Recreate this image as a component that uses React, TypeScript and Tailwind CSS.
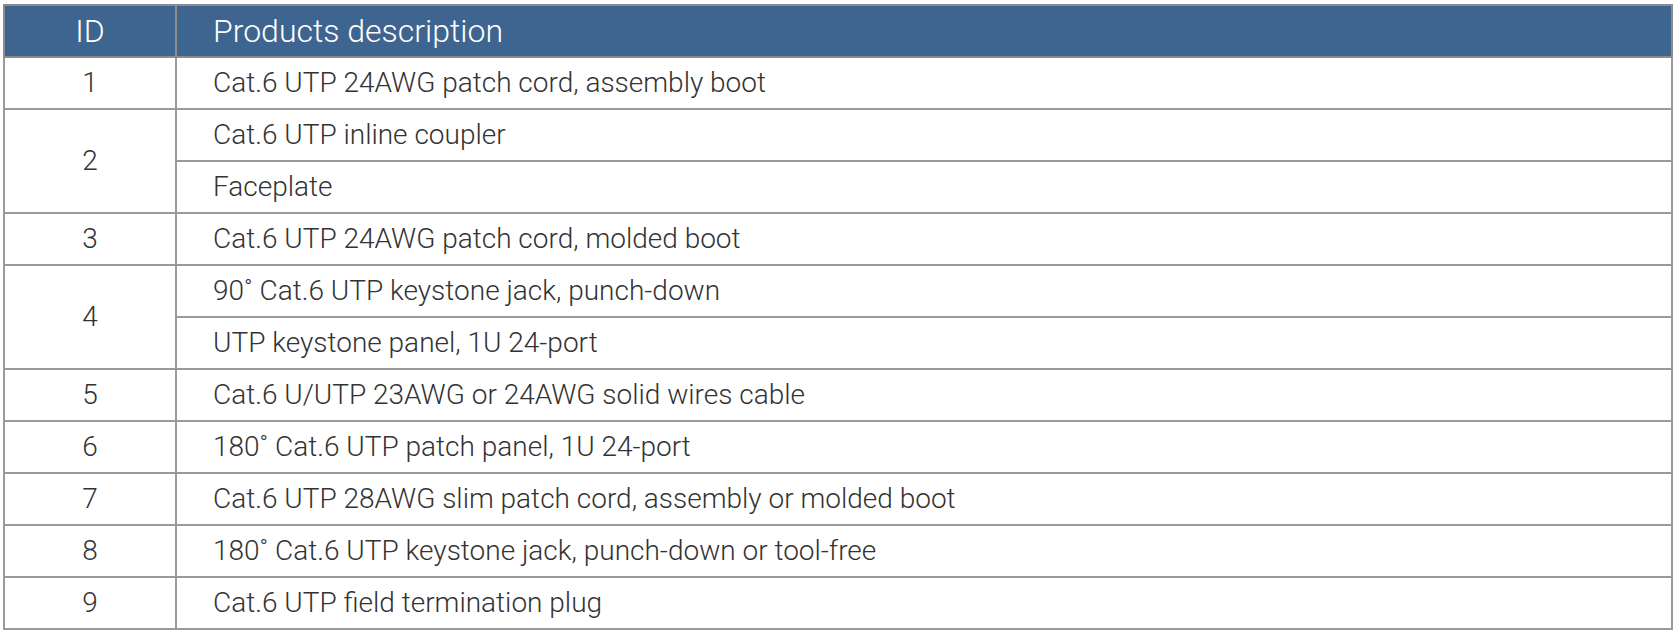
import React from 'react';

type Row = { id: string; items: string[] };

const rows: Row[] = [
  { id: '1', items: ['Cat.6 UTP 24AWG patch cord, assembly boot'] },
  { id: '2', items: ['Cat.6 UTP inline coupler', 'Faceplate'] },
  { id: '3', items: ['Cat.6 UTP 24AWG patch cord, molded boot'] },
  { id: '4', items: ['90˚ Cat.6 UTP keystone jack, punch-down', 'UTP keystone panel, 1U 24-port'] },
  { id: '5', items: ['Cat.6 U/UTP 23AWG or 24AWG solid wires cable'] },
  { id: '6', items: ['180˚ Cat.6 UTP patch panel, 1U 24-port'] },
  { id: '7', items: ['Cat.6 UTP 28AWG slim patch cord, assembly or molded boot'] },
  { id: '8', items: ['180˚ Cat.6 UTP keystone jack, punch-down or tool-free'] },
  { id: '9', items: ['Cat.6 UTP field termination plug'] },
];

export default function App() {
  return (
    <div
      className="w-[1675px] h-[633px] bg-white pl-[3px] pt-[4px]"
      style={{ fontFamily: 'Roboto, "Liberation Sans", Arial, sans-serif' }}
    >
      <table className="w-[1670px] border-collapse border-2 border-[#8c8c8c] text-[28px] font-light text-[#333]">
        <thead>
          <tr className="h-[52px] bg-[#3e6590] text-white text-[32px]">
            <th className="w-[172px] border-2 border-[#8c8c8c] font-light text-center">ID</th>
            <th className="border-2 border-[#8c8c8c] border-l-[#9a9a9a] font-light text-left pl-[36px]">
              Products description
            </th>
          </tr>
        </thead>
        <tbody>
          {rows.map((row) =>
            row.items.map((item, i) => (
              <tr key={row.id + '-' + i} className="h-[52px]">
                {i === 0 && (
                  <td
                    rowSpan={row.items.length}
                    className="w-[172px] border-2 border-[#9a9a9a] text-center align-middle"
                  >
                    {row.id}
                  </td>
                )}
                <td className="border-2 border-[#9a9a9a] pl-[36px]">{item}</td>
              </tr>
            ))
          )}
        </tbody>
      </table>
    </div>
  );
}
